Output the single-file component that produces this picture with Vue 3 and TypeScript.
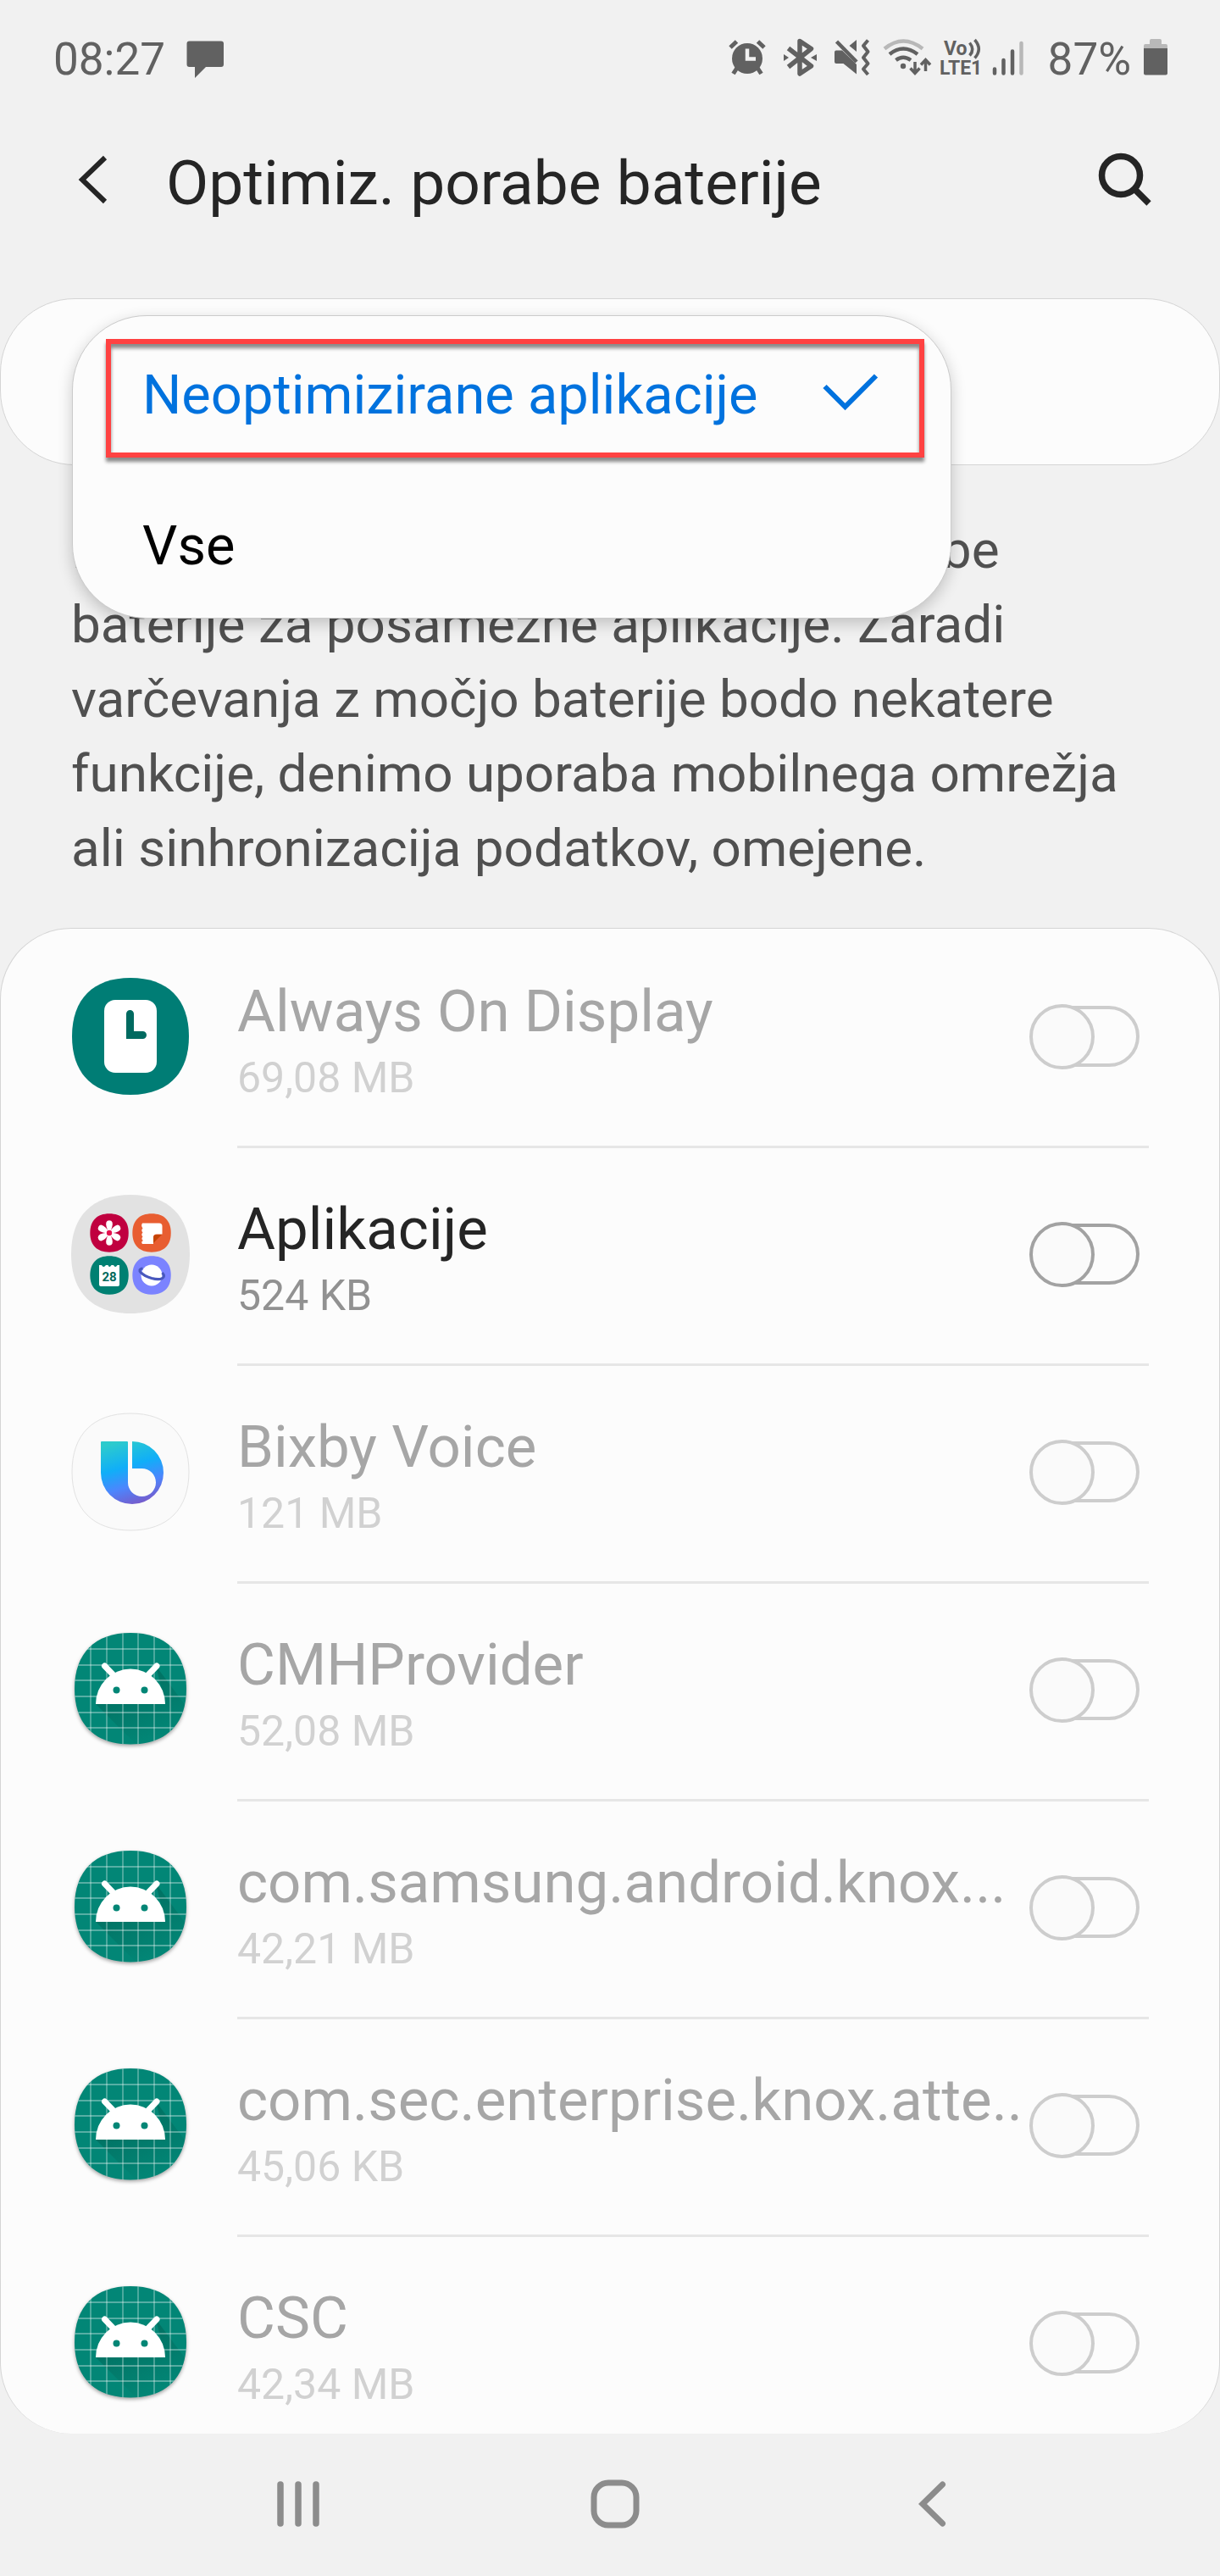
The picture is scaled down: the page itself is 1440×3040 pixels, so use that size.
<script setup lang="ts">
import { ref } from 'vue'

type IconKind = 'clock' | 'folder' | 'bixby' | 'android'

interface AppRow {
  name: string
  size: string
  icon: IconKind
  enabled: boolean
}

const apps: AppRow[] = [
  { name: 'Always On Display', size: '69,08 MB', icon: 'clock', enabled: false },
  { name: 'Aplikacije', size: '524 KB', icon: 'folder', enabled: true },
  { name: 'Bixby Voice', size: '121 MB', icon: 'bixby', enabled: false },
  { name: 'CMHProvider', size: '52,08 MB', icon: 'android', enabled: false },
  { name: 'com.samsung.android.knox...', size: '42,21 MB', icon: 'android', enabled: false },
  { name: 'com.sec.enterprise.knox.atte..', size: '45,06 KB', icon: 'android', enabled: false },
  { name: 'CSC', size: '42,34 MB', icon: 'android', enabled: false },
]

const filters = ['Neoptimizirane aplikacije', 'Vse']
const selected = ref(filters[0])

const squircle = 'M70 1C114 1 139 26 139 70S114 139 70 139 1 114 1 70 26 1 70 1Z'
const petals = [0, 60, 120, 180, 240, 300]
const gridX = [23, 42, 61, 79, 98, 117]
const gridY = [22, 41, 59, 78, 97, 115]
</script>

<template>
  <div class="screen">
    <div class="status">
      <span class="status-text">08:27</span>
      <svg class="message" width="44" height="52" viewBox="220 44 44 52" aria-hidden="true">
        <path d="M223 48.500h38q3 0 3 3v24.500q0 3-3 3h-18l-13 13v-13h-6.500q-3 0-3-3V51.500q0-3 3-3Z" fill="#616161" />
      </svg>
      <span class="spacer"></span>
      <!-- alarm -->
      <svg width="62" height="52" viewBox="852 44 62 52" aria-hidden="true">
        <g stroke="#616161" stroke-width="5" fill="none">
          <path d="M862 56L869.500 49M902 56L894.500 49" />
          <path d="M870 80L865.500 87M894 80L898.500 87" />
        </g>
        <circle cx="882" cy="69" r="18" fill="#616161" />
        <path d="M882 57.500V69.500H892" fill="none" stroke="#f1f1f1" stroke-width="4.500" />
      </svg>
      <!-- bluetooth -->
      <svg width="61" height="52" viewBox="914 44 61 52" aria-hidden="true">
        <path d="M930.500 57L957.500 78L944 87V48.500L957.500 57.500L930.500 79" fill="none" stroke="#616161" stroke-width="5.500" stroke-linejoin="round" />
        <path d="M925 64L931 68L925 72ZM964 64L957 68L964 72Z" fill="#616161" />
      </svg>
      <!-- muted, vibrating -->
      <svg width="60" height="52" viewBox="975 44 60 52" aria-hidden="true">
        <path d="M1011 47V61L1002.500 54Z" fill="#616161" />
        <path d="M985 61.500Q985 59.500 987 59.500H994L1011 76V87.500L995.500 75H987Q985 75 985 73Z" fill="#616161" />
        <path d="M987.500 49L1011 73" stroke="#616161" stroke-width="4.500" />
        <path d="M1024.500 47.500L1019 54L1024.500 61L1019 68L1024.500 75L1019 81.500L1024.500 88" fill="none" stroke="#616161" stroke-width="4" stroke-linejoin="round" />
      </svg>
      <!-- wifi with traffic arrows -->
      <svg width="70" height="52" viewBox="1035 44 70 52" aria-hidden="true">
        <g fill="none" stroke-width="4.500">
          <path d="M1044 57.500Q1066 39.500 1089 57.500" stroke="#b8b8b8" />
          <path d="M1050 64Q1066 51 1083 64" stroke="#616161" />
          <path d="M1057.500 71Q1066 64.500 1075 71" stroke="#616161" />
        </g>
        <circle cx="1066" cy="78" r="3.200" fill="#616161" />
        <path d="M1080 73V85M1074.500 80.500L1080 86.500L1085.500 80.500M1092.500 84V72M1087 76.500L1092.500 70.500L1098 76.500" fill="none" stroke="#616161" stroke-width="3.500" />
      </svg>
      <!-- VoLTE -->
      <svg class="volte" width="61" height="52" viewBox="1105 44 61 52">
        <text x="1114" y="65">Vo</text>
        <text x="1109" y="88">LTE1</text>
        <path d="M1144.500 50.500Q1151 58.500 1144.500 65.500M1150.500 47Q1160 58 1150.500 68.500" fill="none" stroke="#616161" stroke-width="3.500" />
      </svg>
      <!-- signal -->
      <svg width="71" height="52" viewBox="1166 44 71 52" aria-hidden="true">
        <g stroke-width="4.500" stroke-linecap="round">
          <path d="M1174 81.500V86.500M1184.500 71V86.500M1195 60.500V86.500" stroke="#616161" />
          <path d="M1205.500 51V86.500" stroke="#b8b8b8" />
        </g>
      </svg>
      <span class="status-text">87%</span>
      <!-- battery -->
      <svg width="43" height="52" viewBox="1335 44 43 52" aria-hidden="true">
        <path d="M1350 58V54Q1350 52 1352 52H1357V48Q1357 46 1359 46H1369Q1371 46 1371 48V52H1376Q1378 52 1378 54V58Z" fill="#b8b8b8" />
        <path d="M1350 57H1378V86.500Q1378 88.500 1376 88.500H1352Q1350 88.500 1350 86.500Z" fill="#616161" />
      </svg>
    </div>

    <header class="header">
      <button class="icon-btn" type="button" aria-label="Nazaj">
        <svg width="80" height="80" viewBox="84 176 80 80">
          <path d="M124 186L97 212L124 238" fill="none" stroke="#252525" stroke-width="6" />
        </svg>
      </button>
      <h1>Optimiz. porabe baterije</h1>
      <span class="spacer"></span>
      <button class="icon-btn" type="button" aria-label="Iskanje">
        <svg width="72" height="72" viewBox="1290 180 72 72">
          <g fill="none" stroke="#252525">
            <circle cx="1323" cy="207" r="22.500" stroke-width="7.500" />
            <path d="M1339 223L1356 240" stroke-width="7.500" />
          </g>
        </svg>
      </button>
    </header>

    <main>
      <div class="filter">
        <div class="menu" role="listbox" aria-label="Filter">
          <button
            v-for="f in filters"
            :key="f"
            type="button"
            role="option"
            :aria-selected="f === selected"
            :class="['option', { active: f === selected }]"
            @click="selected = f"
          >
            <span>{{ f }}</span>
            <svg v-if="f === selected" width="76" height="52" viewBox="966 440 76 52" aria-hidden="true">
              <path d="M973.500 456L997.500 480L1034 443.500" fill="none" stroke="#0072de" stroke-width="6" />
            </svg>
          </button>
        </div>
      </div>

      <p class="note">
        Izboljšajte možnost optimizacije porabe baterije za posamezne aplikacije. Zaradi varčevanja z
        močjo baterije bodo nekatere funkcije, denimo uporaba mobilnega omrežja ali sinhronizacija
        podatkov, omejene.
      </p>

      <section class="card">
        <ul class="list">
          <li v-for="(app, i) in apps" :key="app.name" :class="['row', { enabled: app.enabled }]">
            <svg v-if="app.icon === 'clock'" class="app-icon" viewBox="0 0 140 140" aria-hidden="true">
              <path :d="squircle" fill="#007d75" />
              <rect x="39" y="27" width="62" height="86" rx="13" fill="#fff" />
              <path d="M65 43.500a4.500 4.500 0 0 1 9 0V64H84.500a4.500 4.500 0 0 1 0 9H65Z" fill="#006a60" />
            </svg>

            <svg v-else-if="app.icon === 'folder'" class="app-icon" viewBox="0 0 140 140" aria-hidden="true">
              <path d="M70 0C115 0 140 25 140 70S115 140 70 140 0 115 0 70 25 0 70 0Z" fill="#e2e2e2" />
              <g transform="translate(22 22) scale(.329)"><path :d="squircle" fill="#c0003f" /></g>
              <g transform="translate(72 22) scale(.329)"><path :d="squircle" fill="#e85d31" /></g>
              <g transform="translate(22 72) scale(.329)"><path :d="squircle" fill="#008072" /></g>
              <g transform="translate(72 72) scale(.329)"><path :d="squircle" fill="#7b83ff" /></g>
              <path
                v-for="p in petals"
                :key="p"
                d="M45 45L42.500 38Q40.500 31 45 31T47.500 38Z"
                fill="#fff"
                stroke="#fff"
                stroke-width="1.500"
                :transform="`rotate(${p} 45 45)`"
              />
              <circle cx="45" cy="45" r="3.200" fill="#e5114f" />
              <path d="M84 33.500H104Q107.500 33.500 107.500 37V46.500H101Q97 46.500 97 50V58H84Q82 55.500 85 54Q82 52 84.500 49.500Q82 47 84.500 44.500Q82 42 84.500 39.500Q82 36.500 84 33.500Z" fill="#fff" />
              <path d="M97 57V51Q97 47 101 47H107Z" fill="#c44404" />
              <path d="M33 83H36Q38 87 41 83H43.500Q45 87 47.500 83H50Q52 87 54.500 83H57V106Q57 108 55 108H35Q33 108 33 106Z" fill="#fff" />
              <text class="calendar-day" x="45" y="102" text-anchor="middle">28</text>
              <circle cx="95" cy="95" r="12.500" fill="#fff" />
              <path d="M84.500 87C76 88 84 95 95 98.500C106 101.500 113 98 107.500 92" fill="none" stroke="#4858bd" stroke-width="3.200" />
            </svg>

            <svg v-else-if="app.icon === 'bixby'" class="app-icon" viewBox="0 0 140 140" aria-hidden="true">
              <defs>
                <linearGradient id="bixby-fill" x1=".3" y1="0" x2=".6" y2="1">
                  <stop offset="0" stop-color="#2ccbcd" />
                  <stop offset=".4" stop-color="#10aef8" />
                  <stop offset=".7" stop-color="#4c86fd" />
                  <stop offset="1" stop-color="#765bcb" />
                </linearGradient>
              </defs>
              <path :d="squircle" fill="#fafafa" stroke="#e2e2e2" />
              <path d="M36 34H66Q67 34 67 35V82.500A16.500 16.500 0 1 0 83.500 66H72V34A37 37 0 1 1 35 71V35Q35 34 36 34Z" fill="url(#bixby-fill)" />
            </svg>

            <svg v-else class="app-icon" viewBox="0 0 140 140" aria-hidden="true">
              <defs>
                <clipPath :id="`plate-${i}`">
                  <path d="M70 3C112 3 136 27 136 69S112 134.500 70 134.500 4 111 4 69 28 3 70 3Z" />
                </clipPath>
                <linearGradient :id="`cast-${i}`" x1="0" y1="0" x2=".5" y2="1">
                  <stop offset=".25" stop-color="#004d40" stop-opacity=".4" />
                  <stop offset="1" stop-color="#004d40" stop-opacity="0" />
                </linearGradient>
              </defs>
              <path class="plate" d="M70 3C112 3 136 27 136 69S112 134.500 70 134.500 4 111 4 69 28 3 70 3Z" fill="#028676" />
              <g :clip-path="`url(#plate-${i})`">
                <path d="M29 87L77 135H136V90L100 42L111 87Z" :fill="`url(#cast-${i})`" />
                <g stroke="#fff" stroke-opacity=".45" stroke-width="1.300">
                  <path v-for="x in gridX" :key="`x${x}`" :d="`M${x} 0V140`" />
                  <path v-for="y in gridY" :key="`y${y}`" :d="`M0 ${y}H140`" />
                </g>
              </g>
              <path d="M39.500 42L52 55M101 42L88.500 55" stroke="#fff" stroke-width="7" stroke-linecap="round" />
              <path d="M29 87A41 41.500 0 0 1 111 87Z" fill="#fff" />
              <circle cx="53.500" cy="70.500" r="4" fill="#028676" />
              <circle cx="86.500" cy="70.500" r="4" fill="#028676" />
            </svg>

            <div class="body">
              <label class="texts" :for="`app-${i}`">
                <span class="name">{{ app.name }}</span>
                <span class="size">{{ app.size }}</span>
              </label>
              <input :id="`app-${i}`" class="switch" type="checkbox" role="switch" :disabled="!app.enabled" />
            </div>
          </li>
        </ul>
      </section>
    </main>

    <nav class="nav">
      <button type="button" aria-label="Nedavno">
        <svg width="60" height="60" viewBox="0 0 60 60">
          <path d="M9 7V53M30 7V53M51 7V53" stroke="#8c8c8c" stroke-width="7.500" stroke-linecap="round" />
        </svg>
      </button>
      <button type="button" aria-label="Domov">
        <svg width="60" height="60" viewBox="0 0 60 60">
          <rect x="5" y="5" width="50" height="50" rx="17" fill="none" stroke="#8c8c8c" stroke-width="7" />
        </svg>
      </button>
      <button type="button" aria-label="Nazaj">
        <svg width="60" height="60" viewBox="0 0 60 60">
          <path d="M42.500 7L19 30L42.500 53" fill="none" stroke="#8c8c8c" stroke-width="7" stroke-linecap="round" />
        </svg>
      </button>
    </nav>
  </div>
</template>

<style>
html,
body {
  background: #f1f1f1;
}
</style>

<style scoped>
.screen {
  font-family: Roboto, 'Noto Sans', sans-serif;
  color: #252525;
  background: #f1f1f1;
  overflow: hidden;
}

svg {
  display: block;
  flex: none;
}

button {
  border: 0;
  padding: 0;
  background: none;
  font: inherit;
  color: inherit;
  text-align: left;
}

.spacer {
  flex: 1;
}

.status {
  display: flex;
  align-items: center;
  height: 140px;
  padding: 0 62px 0 63px;
}

.status-text {
  font-size: 53px;
  line-height: 62px;
  color: #616161;
}

.message {
  margin-left: 25px;
}

.volte {
  font-size: 23px;
  font-weight: 700;
  fill: #616161;
}

.header {
  display: flex;
  align-items: center;
  height: 152px;
  padding: 0 78px 0 84px;
}

.header h1 {
  margin: 0 0 0 32px;
  font-size: 73px;
  line-height: 86px;
  font-weight: 400;
}

.filter {
  position: relative;
  box-sizing: border-box;
  height: 197px;
  margin-top: 60px;
  border: 1px solid #d5d5d5;
  border-radius: 88px;
  background: #fcfcfc;
}

.menu {
  position: absolute;
  top: 19px;
  left: 84px;
  z-index: 1;
  box-sizing: border-box;
  width: 1038px;
  max-width: calc(100% - 168px);
  border: 1px solid #cbcbcb;
  border-radius: 88px;
  background: #fcfcfc;
  box-shadow: 0 6px 18px rgba(0, 0, 0, 0.2);
}

.option {
  position: relative;
  display: flex;
  align-items: center;
  justify-content: space-between;
  box-sizing: border-box;
  width: 100%;
  height: 178px;
  padding: 8px 80px 0 82px;
  font-size: 65px;
  line-height: 76px;
  color: #000;
}

.option.active {
  color: #0072de;
}

.option.active::after {
  content: '';
  position: absolute;
  inset: 27px 31px 11px 39px;
  border: 6px solid #ff4242;
  box-shadow: 0 5px 4px rgba(0, 0, 0, 0.45), inset 0 5px 4px rgba(0, 0, 0, 0.45);
}

.note {
  margin: 0;
  padding: 56px 84px 50px;
  font-size: 62px;
  line-height: 88px;
  color: #505050;
}

.card {
  border: 1px solid #d5d5d5;
  border-bottom: 0;
  border-radius: 84px;
  background: #fcfcfc;
  overflow: hidden;
}

.list {
  margin: -1px 0 -22px;
  padding: 0;
  list-style: none;
}

.row {
  display: flex;
  height: 257px;
  padding: 0 83px;
}

.app-icon {
  width: 140px;
  height: 140px;
  margin: 58px 56px 0 0;
  overflow: visible;
}

.plate {
  filter: drop-shadow(0 2px 2px rgba(0, 0, 0, 0.35));
}

.calendar-day {
  font-size: 15px;
  font-weight: 700;
  fill: #00695c;
}

.body {
  display: flex;
  flex: 1;
  align-items: center;
  min-width: 0;
  border-top: 3px solid #e6e6e6;
  padding: 0 11px 3px 0;
}

.row:first-child .body {
  border-top-color: transparent;
}

.texts {
  flex: 1;
  min-width: 0;
  padding-top: 8px;
  overflow: hidden;
  white-space: nowrap;
}

.name,
.size {
  display: block;
}

.name {
  font-size: 69px;
  line-height: 84px;
  color: #a6a6a6;
}

.size {
  margin-top: 4px;
  font-size: 50px;
  line-height: 64px;
  color: #d1d1d1;
}

.enabled .name {
  color: #252525;
}

.enabled .size {
  color: #919191;
}

.switch {
  appearance: none;
  position: relative;
  flex: none;
  width: 130px;
  height: 77px;
  margin: 0;
  color: #cdcdcd;
}

.enabled .switch {
  color: #a2a2a2;
}

.switch::before,
.switch::after {
  content: '';
  position: absolute;
  box-sizing: border-box;
  border: 4px solid currentColor;
}

.switch::before {
  inset: 2px 0 3px 4px;
  border-radius: 36px;
}

.switch::after {
  top: 0;
  left: 0;
  width: 77px;
  height: 77px;
  border-radius: 50%;
  background: #fafafa;
}

.switch:checked::after {
  left: auto;
  right: 0;
}

.nav {
  display: flex;
  justify-content: center;
  box-sizing: border-box;
  height: 168px;
  padding: 0 0 2px 12px;
}

.nav button {
  display: flex;
  align-items: center;
  justify-content: center;
  width: 26.2%;
}
</style>
